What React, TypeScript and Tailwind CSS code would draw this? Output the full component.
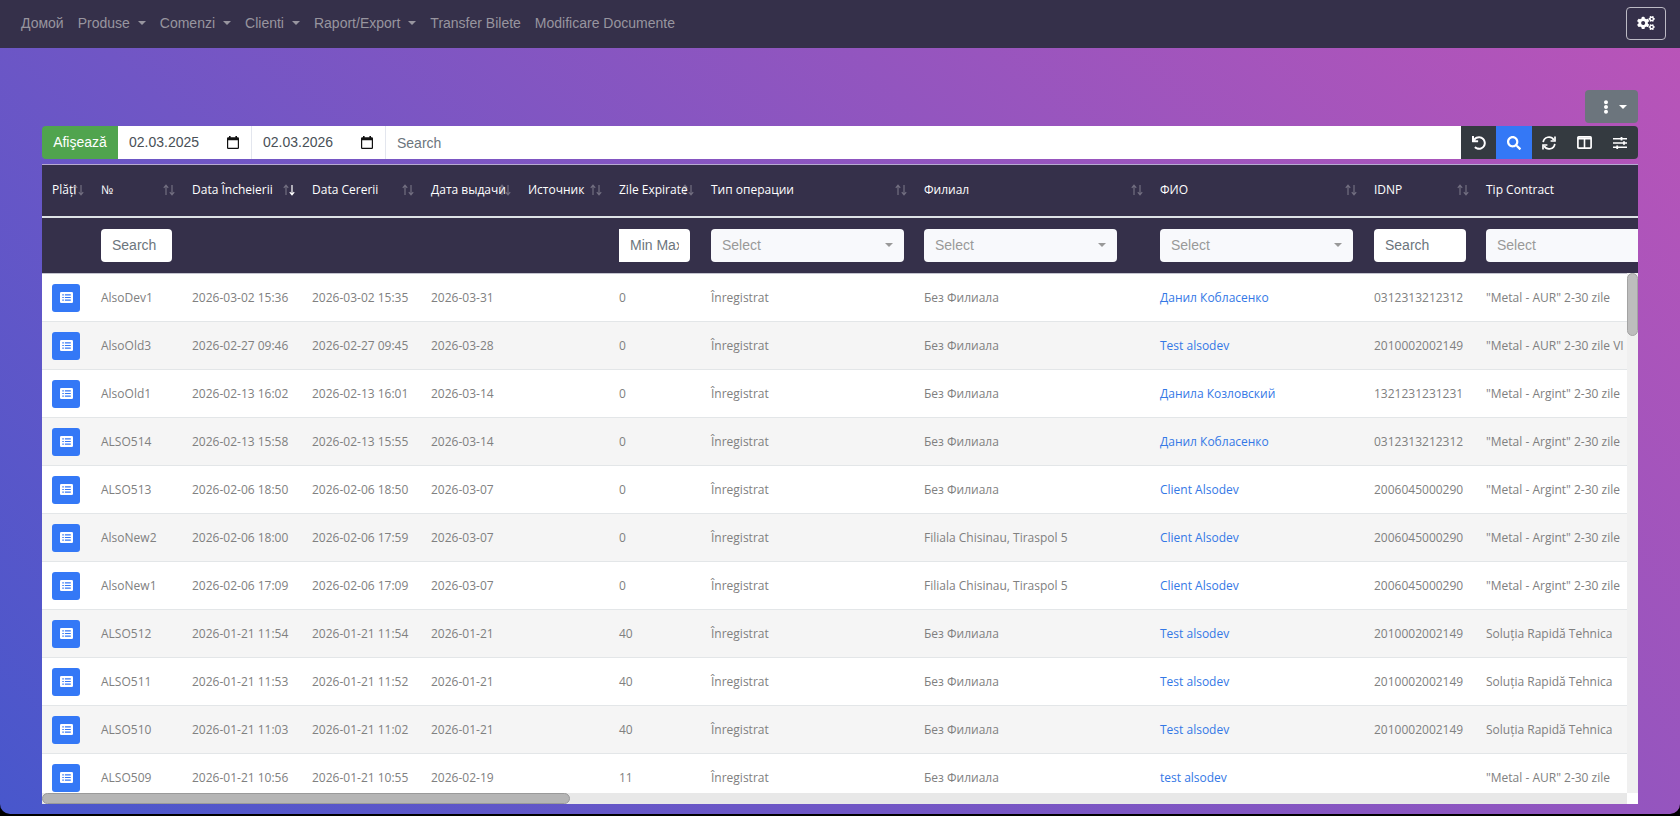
import React from "react";
import { FaCogs, FaEllipsisV, FaSearch, FaUndo } from "react-icons/fa";

type Column = {
  title: string;
  width: string;
  sort?: "none" | "desc";
  filter?: "text" | "range" | "select";
};

const columns: Column[] = [
  { title: "Plăți", width: "w-[49px]", sort: "none" },
  { title: "№", width: "w-[91px]", sort: "none", filter: "text" },
  { title: "Data Încheierii", width: "w-[120px]", sort: "desc" },
  { title: "Data Cererii", width: "w-[119px]", sort: "none" },
  { title: "Дата выдачи", width: "w-[97px]", sort: "none" },
  { title: "Источник", width: "w-[91px]", sort: "none" },
  { title: "Zile Expirate", width: "w-[92px]", sort: "none", filter: "range" },
  { title: "Тип операции", width: "w-[213px]", sort: "none", filter: "select" },
  { title: "Филиал", width: "w-[236px]", sort: "none", filter: "select" },
  { title: "ФИО", width: "w-[214px]", sort: "none", filter: "select" },
  { title: "IDNP", width: "w-[112px]", sort: "none", filter: "text" },
  { title: "Tip Contract", width: "w-[320px]", filter: "select" },
];

const rows: string[][] = [
  ["AlsoDev1", "2026-03-02 15:36", "2026-03-02 15:35", "2026-03-31", "", "0", "Înregistrat", "Без Филиала", "Данил Кобласенко", "0312313212312", "\"Metal - AUR\" 2-30 zile"],
  ["AlsoOld3", "2026-02-27 09:46", "2026-02-27 09:45", "2026-03-28", "", "0", "Înregistrat", "Без Филиала", "Test alsodev", "2010002002149", "\"Metal - AUR\" 2-30 zile VI"],
  ["AlsoOld1", "2026-02-13 16:02", "2026-02-13 16:01", "2026-03-14", "", "0", "Înregistrat", "Без Филиала", "Данила Козловский", "1321231231231", "\"Metal - Argint\" 2-30 zile"],
  ["ALSO514", "2026-02-13 15:58", "2026-02-13 15:55", "2026-03-14", "", "0", "Înregistrat", "Без Филиала", "Данил Кобласенко", "0312313212312", "\"Metal - Argint\" 2-30 zile"],
  ["ALSO513", "2026-02-06 18:50", "2026-02-06 18:50", "2026-03-07", "", "0", "Înregistrat", "Без Филиала", "Client Alsodev", "2006045000290", "\"Metal - Argint\" 2-30 zile"],
  ["AlsoNew2", "2026-02-06 18:00", "2026-02-06 17:59", "2026-03-07", "", "0", "Înregistrat", "Filiala Chisinau, Tiraspol 5", "Client Alsodev", "2006045000290", "\"Metal - Argint\" 2-30 zile"],
  ["AlsoNew1", "2026-02-06 17:09", "2026-02-06 17:09", "2026-03-07", "", "0", "Înregistrat", "Filiala Chisinau, Tiraspol 5", "Client Alsodev", "2006045000290", "\"Metal - Argint\" 2-30 zile"],
  ["ALSO512", "2026-01-21 11:54", "2026-01-21 11:54", "2026-01-21", "", "40", "Înregistrat", "Без Филиала", "Test alsodev", "2010002002149", "Soluția Rapidă Tehnica"],
  ["ALSO511", "2026-01-21 11:53", "2026-01-21 11:52", "2026-01-21", "", "40", "Înregistrat", "Без Филиала", "Test alsodev", "2010002002149", "Soluția Rapidă Tehnica"],
  ["ALSO510", "2026-01-21 11:03", "2026-01-21 11:02", "2026-01-21", "", "40", "Înregistrat", "Без Филиала", "Test alsodev", "2010002002149", "Soluția Rapidă Tehnica"],
  ["ALSO509", "2026-01-21 10:56", "2026-01-21 10:55", "2026-02-19", "", "11", "Înregistrat", "Без Филиала", "test alsodev", "", "\"Metal - AUR\" 2-30 zile"],
];

const CLIENT_COLUMN = 8;

const navItems = [
  { label: "Домой", menu: false },
  { label: "Produse", menu: true },
  { label: "Comenzi", menu: true },
  { label: "Clienti", menu: true },
  { label: "Raport/Export", menu: true },
  { label: "Transfer Bilete", menu: false },
  { label: "Modificare Documente", menu: false },
];

function Caret() {
  return (
    <svg viewBox="0 0 8 4" className="h-1 w-2 shrink-0" fill="currentColor" aria-hidden="true">
      <path d="M0 0h8L4 4z" />
    </svg>
  );
}

function SortArrows({ sort }: { sort: "none" | "desc" }) {
  return (
    <svg viewBox="0 0 12 12" className="absolute top-1/2 right-[7px] h-3 w-3 -translate-y-1/2" fill="none" stroke="#fff" strokeWidth="1.2" aria-hidden="true">
      <path d="M3 11V1.5M0.8 3.8L3 1.2l2.2 2.6" opacity="0.3" />
      <path d="M9 1v9.5M6.8 8.2L9 10.8l2.2-2.6" opacity={sort === "desc" ? 1 : 0.3} />
    </svg>
  );
}

function ListIcon() {
  return (
    <svg viewBox="0 0 13 11" className="h-[11px] w-[13px]" aria-hidden="true">
      <rect width="13" height="11" rx="1.3" fill="#fff" />
      <path d="M2.300 2.800h1.500M2.300 5.500h1.500M2.300 8.200h1.500M4.900 2.800h5.900M4.900 5.500h5.900M4.900 8.200h5.900" stroke="#3478f6" strokeWidth="1.200" />
    </svg>
  );
}

function CalendarIcon() {
  return (
    <svg viewBox="0 0 12 13" className="h-[13px] w-3 shrink-0" aria-hidden="true">
      <path d="M2 0h1.6v1.2h4.8V0H10v1.2h.8A1.2 1.2 0 0 1 12 2.400v9.400A1.200 1.200 0 0 1 10.800 13H1.200A1.200 1.200 0 0 1 0 11.800V2.400A1.200 1.200 0 0 1 1.200 1.200H2zM1.200 4.200v7.600h9.600V4.200z" fill="#111" fillRule="evenodd" />
    </svg>
  );
}

function RefreshIcon() {
  return (
    <svg viewBox="0 0 14 14" className="h-3.5 w-3.5" fill="none" stroke="currentColor" strokeWidth="1.7" aria-hidden="true">
      <path d="M1.200 6.200A5.700 5.700 0 0 1 11.800 4M12.800 7.800A5.700 5.700 0 0 1 2.200 10" />
      <path d="M13 0.500V5H8.600M1 13.500V9h4.400" />
    </svg>
  );
}

function ColumnsIcon() {
  return (
    <svg viewBox="0 0 15 13" className="h-[13px] w-[15px]" fill="none" stroke="currentColor" aria-hidden="true">
      <rect x="0.900" y="0.900" width="13.200" height="11.200" rx="0.800" strokeWidth="1.700" />
      <path d="M1 2.500h13" strokeWidth="2.200" />
      <path d="M7.500 2v10" strokeWidth="1.600" />
    </svg>
  );
}

function SlidersIcon() {
  return (
    <svg viewBox="0 0 14 12" className="h-3 w-3.5" fill="none" stroke="currentColor" strokeWidth="1.500" aria-hidden="true">
      <path d="M0 1.800h14M0 6h14M0 10.200h14" />
      <path d="M8.500 0v3.600M11 4.200v3.600M4.200 8.400V12" strokeWidth="1.800" />
    </svg>
  );
}

function DateField({ label, value }: { label: string; value: string }) {
  return (
    <label className="flex h-[33px] w-[134px] shrink-0 items-center border-r border-[#e3e6ee] bg-white pr-3 pl-[11px]">
      <input
        aria-label={label}
        defaultValue={value}
        className="w-full min-w-0 bg-transparent text-[14px] text-[#495057] outline-none"
      />
      <CalendarIcon />
    </label>
  );
}

const textInput =
  "block h-[33px] w-full bg-white px-[11px] text-[14px] text-[#495057] outline-none placeholder:text-[#6c757d]";

function Filter({ column }: { column: Column }) {
  if (column.filter === "text") {
    return <input aria-label={column.title} placeholder="Search" className={textInput + " rounded"} />;
  }
  if (column.filter === "range") {
    return (
      <div className="w-[71px]">
        <input aria-label={column.title} placeholder="Min Max" className={textInput + " rounded-r"} />
      </div>
    );
  }
  if (column.filter === "select") {
    return (
      <div className="relative w-[193px] text-[#999]">
        <select
          aria-label={column.title}
          className="block h-[33px] w-full appearance-none rounded bg-[#f8f9fc] px-[11px] text-[14px] outline-none"
        >
          <option>Select</option>
        </select>
        <span className="pointer-events-none absolute inset-y-0 right-[11px] flex items-center">
          <Caret />
        </span>
      </div>
    );
  }
  return null;
}

const tool = "flex h-[33px] items-center justify-center";

export default function App() {
  return (
    <div className="flex h-screen flex-col bg-black pb-[2px] font-['Liberation_Sans',Arial,sans-serif]">
      <div className="flex min-h-0 flex-1 flex-col overflow-hidden rounded-b-[10px] bg-[linear-gradient(45deg,#4857cc,#bb54b8)]">
        <nav className="flex h-12 shrink-0 items-center justify-between bg-[#35304a] pr-3.5 pb-0.5 pl-[21px]">
          <ul className="flex items-center gap-3.5 text-[14px] text-[#98959f]">
            {navItems.map((item) => (
              <li key={item.label}>
                <a href="#" className="flex items-center gap-2">
                  {item.label}
                  {item.menu && <Caret />}
                </a>
              </li>
            ))}
          </ul>
          <button aria-label="Settings" className="flex h-[33px] w-10 items-center justify-center rounded border border-[#bcbac4] text-white">
            <FaCogs className="h-3.5 w-[18px]" />
          </button>
        </nav>

        <main className="flex min-h-0 flex-1 flex-col px-[42px] pt-[42px] pb-2.5">
          <div className="flex justify-end">
            <button aria-label="Actions" className="flex h-[33px] w-[53px] items-center justify-center gap-1.5 rounded bg-[#6c757d] pl-0.5 text-white">
              <FaEllipsisV className="size-3.5" />
              <Caret />
            </button>
          </div>

          <div className="mt-[3px] flex shrink-0 overflow-hidden rounded">
            <button className="h-[33px] w-[76px] shrink-0 bg-[#50a44e] text-[14px] text-white">Afişează</button>
            <DateField label="Start date" value="02.03.2025" />
            <DateField label="End date" value="02.03.2026" />
            <input
              aria-label="Search"
              placeholder="Search"
              className="h-[33px] min-w-0 flex-1 bg-white px-[11px] text-[14px] text-[#495057] outline-none placeholder:text-[#6c757d]"
            />
            <div className="grid w-[177px] grid-cols-5 bg-[#343a40] text-white">
              <button aria-label="Reset" className={tool}><FaUndo className="size-3.5" /></button>
              <button aria-label="Search now" className={tool + " bg-[#3478f6]"}><FaSearch className="size-3.5" /></button>
              <button aria-label="Refresh" className={tool}><RefreshIcon /></button>
              <button aria-label="Columns" className={tool}><ColumnsIcon /></button>
              <button aria-label="Filters" className={tool}><SlidersIcon /></button>
            </div>
          </div>

          <section className="relative mt-[5px] min-h-0 flex-1 overflow-hidden bg-white">
            <table className="w-full min-w-max table-fixed border-collapse text-left text-[12px] whitespace-nowrap font-['Open_Sans','Noto_Sans',sans-serif]">
              <colgroup>
                {columns.map((column) => (
                  <col key={column.title} className={column.width} />
                ))}
              </colgroup>
              <thead className="bg-[#35304a] text-white">
                <tr className="h-[52px] border-t border-b-2 border-t-[#b7a9d2] border-b-[#dee2e6]">
                  {columns.map((column) => (
                    <th key={column.title} className="relative px-2.5 font-medium">
                      {column.title}
                      {column.sort && <SortArrows sort={column.sort} />}
                    </th>
                  ))}
                </tr>
                <tr className="h-[57px] border-b border-[#c4c4cf] font-['Liberation_Sans',Arial,sans-serif]">
                  {columns.map((column) => (
                    <td key={column.title} className="px-2.5">
                      <Filter column={column} />
                    </td>
                  ))}
                </tr>
              </thead>
              <tbody className="text-[#808080]">
                {rows.map((row) => (
                  <tr key={row[0]} className="h-12 border-b border-[#e3e6e8] even:bg-[#f5f5f5]">
                    <td className="px-2.5">
                      <button aria-label={"Plăți " + row[0]} className="flex h-7 w-7 items-center justify-center rounded-[3px] bg-[#3478f6]">
                        <ListIcon />
                      </button>
                    </td>
                    {row.map((value, index) => (
                      <td key={index} className="px-2.5">
                        {index === CLIENT_COLUMN ? (
                          <a href="#" className="text-[#3478e6]">{value}</a>
                        ) : (
                          value
                        )}
                      </td>
                    ))}
                  </tr>
                ))}
              </tbody>
            </table>
            <div className="absolute top-[109px] right-0 bottom-[11px] w-[11px] bg-[#f0f0f0]" aria-hidden="true">
              <div className="h-[63px] rounded-full border border-[#a3a3a3] bg-[#bdbdbd]" />
            </div>
            <div className="absolute right-[11px] bottom-0 left-0 h-[11px] bg-[#e8e8e8]" aria-hidden="true">
              <div className="h-full w-1/3 rounded-full border border-[#9a9a9a] bg-[#b5b5b5]" />
            </div>
            <div className="absolute right-0 bottom-0 size-[11px] bg-white" aria-hidden="true" />
          </section>
        </main>
      </div>
    </div>
  );
}
